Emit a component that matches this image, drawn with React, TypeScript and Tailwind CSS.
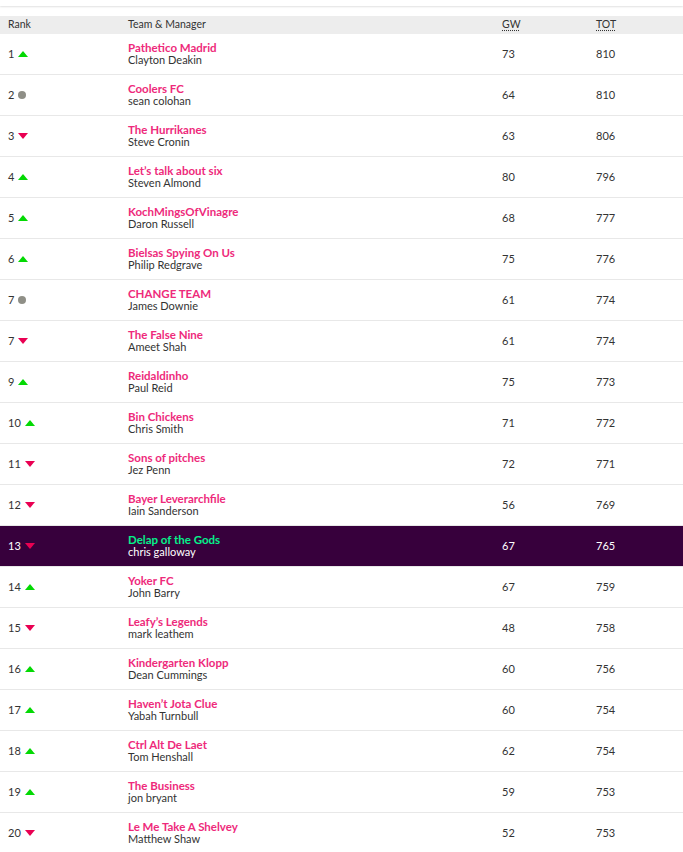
type Move = 'up' | 'down' | 'same'

type Entry = {
  rank: number
  move: Move
  team: string
  manager: string
  gw: number
  tot: number
  mine?: boolean
}

const entries: Entry[] = [
  { rank: 1, move: 'up', team: 'Pathetico Madrid', manager: 'Clayton Deakin', gw: 73, tot: 810 },
  { rank: 2, move: 'same', team: 'Coolers FC', manager: 'sean colohan', gw: 64, tot: 810 },
  { rank: 3, move: 'down', team: 'The Hurrikanes', manager: 'Steve Cronin', gw: 63, tot: 806 },
  { rank: 4, move: 'up', team: 'Let’s talk about six', manager: 'Steven Almond', gw: 80, tot: 796 },
  { rank: 5, move: 'up', team: 'KochMingsOfVinagre', manager: 'Daron Russell', gw: 68, tot: 777 },
  { rank: 6, move: 'up', team: 'Bielsas Spying On Us', manager: 'Philip Redgrave', gw: 75, tot: 776 },
  { rank: 7, move: 'same', team: 'CHANGE TEAM', manager: 'James Downie', gw: 61, tot: 774 },
  { rank: 7, move: 'down', team: 'The False Nine', manager: 'Ameet Shah', gw: 61, tot: 774 },
  { rank: 9, move: 'up', team: 'Reidaldinho', manager: 'Paul Reid', gw: 75, tot: 773 },
  { rank: 10, move: 'up', team: 'Bin Chickens', manager: 'Chris Smith', gw: 71, tot: 772 },
  { rank: 11, move: 'down', team: 'Sons of pitches', manager: 'Jez Penn', gw: 72, tot: 771 },
  { rank: 12, move: 'down', team: 'Bayer Leverarchfile', manager: 'Iain Sanderson', gw: 56, tot: 769 },
  { rank: 13, move: 'down', team: 'Delap of the Gods', manager: 'chris galloway', gw: 67, tot: 765, mine: true },
  { rank: 14, move: 'up', team: 'Yoker FC', manager: 'John Barry', gw: 67, tot: 759 },
  { rank: 15, move: 'down', team: 'Leafy’s Legends', manager: 'mark leathem', gw: 48, tot: 758 },
  { rank: 16, move: 'up', team: 'Kindergarten Klopp', manager: 'Dean Cummings', gw: 60, tot: 756 },
  { rank: 17, move: 'up', team: 'Haven’t Jota Clue', manager: 'Yabah Turnbull', gw: 60, tot: 754 },
  { rank: 18, move: 'up', team: 'Ctrl Alt De Laet', manager: 'Tom Henshall', gw: 62, tot: 754 },
  { rank: 19, move: 'up', team: 'The Business', manager: 'jon bryant', gw: 59, tot: 753 },
  { rank: 20, move: 'down', team: 'Le Me Take A Shelvey', manager: 'Matthew Shaw', gw: 52, tot: 753 },
]

function MoveIcon({ move }: { move: Move }) {
  if (move === 'same') {
    return <span className="inline-block w-[8px] h-[8px] rounded-full bg-[#8f8f87]" />
  }
  return (
    <svg width="10" height="6" viewBox="0 0 10 6" className="block">
      {move === 'up' ? (
        <path d="M5 0 L10 6 L0 6 Z" fill="#03d903" />
      ) : (
        <path d="M0 0 L10 0 L5 6 Z" fill="#e90052" />
      )}
    </svg>
  )
}

const cols = 'grid grid-cols-[120px_374px_94px_1fr]'

export default function App() {
  return (
    <div
      className="w-[683px] bg-white text-[11px] text-[#37003c]"
      style={{ fontFamily: 'Lato, "Noto Sans", sans-serif' }}
    >
      {/* card edge above the table */}
      <div className="h-[6px] bg-white shadow-[0_1px_2px_rgba(0,0,0,0.12)]" />

      <div className={`${cols} mt-[10px] h-[18px] items-center bg-[#ededed] text-[10.5px] text-[#333]`}>
        <div className="pl-2">Rank</div>
        <div className="pl-2">Team &amp; Manager</div>
        <div className="pl-2">
          <abbr title="Gameweek" className="underline decoration-dotted underline-offset-2">GW</abbr>
        </div>
        <div className="pl-2">
          <abbr title="Total" className="underline decoration-dotted underline-offset-2">TOT</abbr>
        </div>
      </div>

      {entries.map((e, i) => (
        <div
          key={i}
          className={`${cols} h-[41px] items-center border-b border-[#e8e8e8] ${
            e.mine ? 'bg-[#37003c] text-white' : 'text-[#333]'
          }`}
        >
          <div className="pl-2 flex items-center gap-[4px]">
            <span>{e.rank}</span>
            <MoveIcon move={e.move} />
          </div>
          <div className="pl-2 leading-[12px]">
            <div className={`font-bold text-[11.5px] ${e.mine ? 'text-[#05f08a]' : 'text-[#ee2a7b]'}`}>{e.team}</div>
            <div>{e.manager}</div>
          </div>
          <div className="pl-2">{e.gw}</div>
          <div className="pl-2">{e.tot}</div>
        </div>
      ))}
    </div>
  )
}
